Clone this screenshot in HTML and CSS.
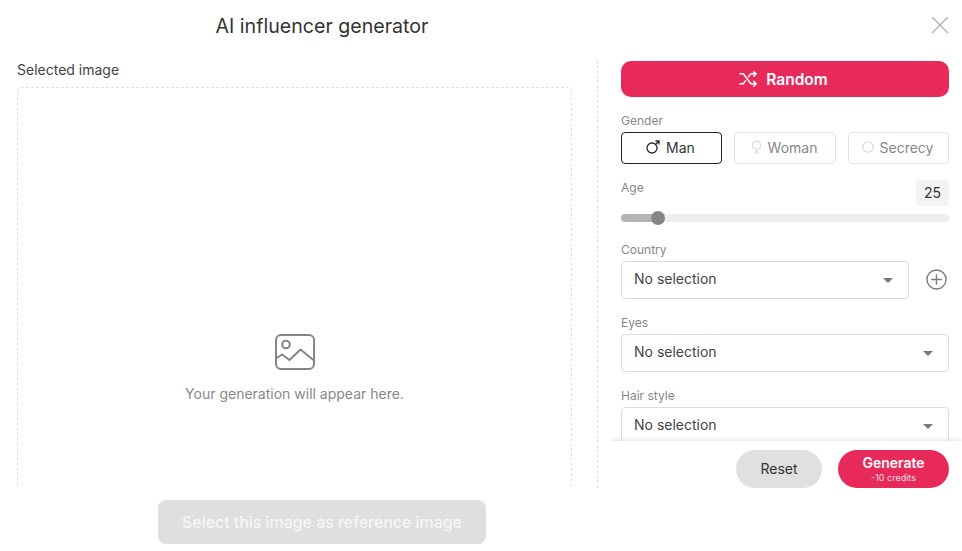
FILE: index.html
```html
<!DOCTYPE html>
<html lang="en">
<head>
    <meta charset="UTF-8">
    <meta name="viewport" content="width=device-width, initial-scale=1.0">
    <title>AI influencer generator</title>
    <link rel="stylesheet" href="styles.css">
</head>
<body>

    <div class="modal">
        <div class="modal-header">
            <h1 class="modal-title">AI influencer generator</h1>
            <button class="close-button" aria-label="Close">
                <svg width="18" height="18" viewBox="0 0 18 18" fill="none" stroke="#b5b5b5" stroke-width="1.5">
                    <path d="M1 1l16 16M17 1L1 17"/>
                </svg>
            </button>
        </div>

        <div class="modal-body">
            <div class="image-column">
                <div class="section-label">Selected image</div>
                <div class="image-box">
                    <svg width="42" height="38" viewBox="0 0 42 38" fill="none" stroke="#858585" stroke-width="2" stroke-linejoin="round" stroke-linecap="round">
                        <rect x="2" y="2" width="38" height="34" rx="5"/>
                        <circle cx="12" cy="11.5" r="3.8"/>
                        <path d="M2 25.5l6-4 7.5 5.5 11-10.5 13.5 11"/>
                    </svg>
                    <p class="image-hint">Your generation will appear here.</p>
                </div>
            </div>

            <div class="options-column">
                <div class="options-scroll">
                    <button class="random-button">
                        <svg width="19" height="16" viewBox="0 0 20 16" fill="none" stroke="#fff" stroke-width="1.6" stroke-linecap="round" stroke-linejoin="round">
                            <path d="M1 2.5h3.5l8 10.5H18M1 13h3.5l2.3-3M10 5.5l2.5-3H18M15.5 0.5l2.7 2-2.7 2.5M15.5 10.5l2.7 2.5-2.700 2.500"/>
                        </svg>
                        Random
                    </button>

                    <div class="field-label gender-label">Gender</div>
                    <div class="gender-row">
                        <button class="gender-option active">
                            <svg width="14" height="14" viewBox="0 0 14 14" fill="none" stroke="#2c2c2c" stroke-width="1.3">
                                <circle cx="6" cy="8" r="5"/>
                                <path d="M9.5 4.5L13 1M9.5 1H13v3.5"/>
                            </svg>
                            Man
                        </button>
                        <button class="gender-option">
                            <svg width="11" height="16" viewBox="0 0 12 16" fill="none" stroke="#dcdcdc" stroke-width="1.3">
                                <circle cx="6" cy="6" r="4.5"/>
                                <path d="M6 10.5V15.5M3.5 13.5h5"/>
                            </svg>
                            Woman
                        </button>
                        <button class="gender-option">
                            <svg width="12" height="12" viewBox="0 0 12 12" fill="none" stroke="#dcdcdc" stroke-width="1.3">
                                <circle cx="6" cy="6" r="5.2"/>
                            </svg>
                            Secrecy
                        </button>
                    </div>

                    <div class="age-head">
                        <div class="field-label">Age</div>
                        <div class="age-value">25</div>
                    </div>
                    <div class="slider">
                        <div class="slider-fill"></div>
                        <div class="slider-knob"></div>
                    </div>

                    <div class="field-label country-label">Country</div>
                    <div class="country-row">
                        <div class="select-box"><span class="select-text">No selection</span><span class="select-arrow"></span></div>
                        <svg class="add-icon" width="21" height="21" viewBox="0 0 22 22" fill="none" stroke="#7d7d7d" stroke-width="1.5">
                            <circle cx="11" cy="11" r="10"/>
                            <path d="M11 5.5v11M5.5 11h11"/>
                        </svg>
                    </div>

                    <div class="field-label select-label">Eyes</div>
                    <div class="select-box"><span class="select-text">No selection</span><span class="select-arrow"></span></div>

                    <div class="field-label select-label">Hair style</div>
                    <div class="select-box"><span class="select-text">No selection</span><span class="select-arrow"></span></div>
                </div>

                <div class="options-footer">
                    <button class="reset-button">Reset</button>
                    <button class="generate-button">
                        <span class="generate-text">Generate</span>
                        <span class="generate-credits">-10 credits</span>
                    </button>
                </div>
            </div>
        </div>

        <div class="modal-footer">
            <button class="select-image-button">Select this image as reference image</button>
        </div>
    </div>

</body>
</html>
```

FILE: styles.css
```css
* {
    box-sizing: border-box;
}
body {
    margin: 0;
    font-family: Inter, "Noto Sans", sans-serif;
    color: #333;
    background-color: #fff;
    overflow: hidden;
}
button {
    font-family: inherit;
    cursor: pointer;
    border: none;
}
.modal {
    width: 962px;
    height: 551px;
    overflow: hidden;
}
.modal-header {
    display: flex;
    justify-content: space-between;
    align-items: center;
    height: 52px;
    padding-right: 13px;
}
.modal-title {
    width: 644px;
    margin: 0;
    font-size: 19.6px;
    font-weight: 400;
    text-align: center;
    color: #333;
}
.close-button {
    display: flex;
    margin-bottom: 2px;
    padding: 0;
    background: none;
}
.modal-body {
    display: flex;
    height: 436px;
}
.image-column {
    width: 598px;
    margin-top: 8px;
    padding: 0 25px 0 17px;
    border-right: 1px dashed #e2e2e2;
    overflow: hidden;
}
.section-label {
    margin-bottom: 7px;
    font-size: 14px;
    line-height: 20px;
    color: #444;
}
.image-box {
    display: flex;
    flex-direction: column;
    align-items: center;
    justify-content: center;
    height: 564px;
    border: 1px dashed #e2e2e2;
    border-radius: 4px;
}
.image-hint {
    margin: 12px 0 0;
    font-size: 14px;
    line-height: 22px;
    color: #888;
}
.options-column {
    display: flex;
    flex-direction: column;
    width: 352px;
    margin-left: 12px;
}
.options-scroll {
    height: 389px;
    padding: 9px 13px 0 11px;
    overflow: hidden;
}
.random-button {
    display: flex;
    align-items: center;
    justify-content: center;
    gap: 8px;
    width: 100%;
    height: 36px;
    padding: 0 3px 0 0;
    background-color: #e82a5a;
    border-radius: 10px;
    color: #fff;
    font-size: 15.5px;
    font-weight: 600;
}
.field-label {
    font-size: 12px;
    line-height: 16px;
    color: #888;
}
.gender-label {
    margin-top: 16px;
    margin-bottom: 3px;
}
.gender-row {
    display: grid;
    grid-template-columns: 101px 102px 101px;
    gap: 12px;
}
.gender-option {
    display: flex;
    align-items: center;
    justify-content: center;
    gap: 6px;
    height: 32px;
    padding: 0 2px 2px 0;
    background-color: #fff;
    border: 1px solid #e3e3e3;
    border-radius: 4px;
    font-size: 14px;
    color: #888;
}
.gender-option.active {
    border-color: #222;
    color: #333;
}
.age-head {
    display: flex;
    justify-content: space-between;
    margin-top: 16px;
    height: 26px;
}
.age-value {
    width: 33px;
    height: 26px;
    background-color: #f3f3f3;
    border-radius: 4px;
    font-size: 14px;
    line-height: 26px;
    text-align: center;
    color: #333;
}
.slider {
    position: relative;
    height: 8px;
    margin-top: 8px;
    background-color: #eee;
    border-radius: 4px;
}
.slider-fill {
    width: 37px;
    height: 8px;
    background-color: #b5b5b5;
    border-radius: 4px;
}
.slider-knob {
    position: absolute;
    left: 30px;
    top: -3px;
    width: 14px;
    height: 14px;
    background-color: #868686;
    border-radius: 50%;
}
.country-label {
    margin-top: 20px;
    margin-bottom: 3px;
}
.country-row {
    display: flex;
    align-items: center;
    gap: 17px;
}
.country-row .select-box {
    flex: 1;
}
.add-icon {
    flex-shrink: 0;
    margin-right: 2px;
    margin-bottom: 2px;
}
.select-label {
    margin-top: 16px;
    margin-bottom: 3px;
}
.select-box {
    display: flex;
    align-items: center;
    justify-content: space-between;
    height: 38px;
    padding: 0 15px 0 12px;
    background-color: #fff;
    border: 1px solid #ddd;
    border-radius: 4px;
    font-size: 14px;
    color: #444;
}
.select-text {
    margin-bottom: 3px;
}
.select-arrow {
    width: 0;
    height: 0;
    border-left: 5px solid transparent;
    border-right: 5px solid transparent;
    border-top: 5px solid #777;
}
.options-footer {
    position: relative;
    display: flex;
    justify-content: flex-end;
    gap: 16px;
    height: 47px;
    padding: 9px 13px 0 0;
    background-color: #fff;
    box-shadow: 0 -1px 5px rgba(0, 0, 0, 0.12);
    clip-path: inset(-8px 0 0 0);
}
.reset-button {
    width: 86px;
    height: 38px;
    padding: 0 0 2px;
    background-color: #e0e0e0;
    border-radius: 19px;
    font-size: 14px;
    color: #333;
}
.generate-button {
    display: flex;
    flex-direction: column;
    align-items: center;
    justify-content: center;
    width: 111px;
    height: 38px;
    padding: 0;
    background-color: #e82a5a;
    border-radius: 19px;
    color: #fff;
}
.generate-text {
    font-size: 14px;
    line-height: 18px;
    font-weight: 600;
}
.generate-credits {
    font-size: 9px;
    line-height: 12px;
    color: rgba(255, 255, 255, 0.85);
}
.modal-footer {
    width: 644px;
    padding-top: 12px;
    text-align: center;
}
.select-image-button {
    width: 328px;
    height: 44px;
    background-color: #dfdfdf;
    border-radius: 8px;
    font-size: 15.9px;
    font-weight: 500;
    color: #f6f6f6;
}
```
